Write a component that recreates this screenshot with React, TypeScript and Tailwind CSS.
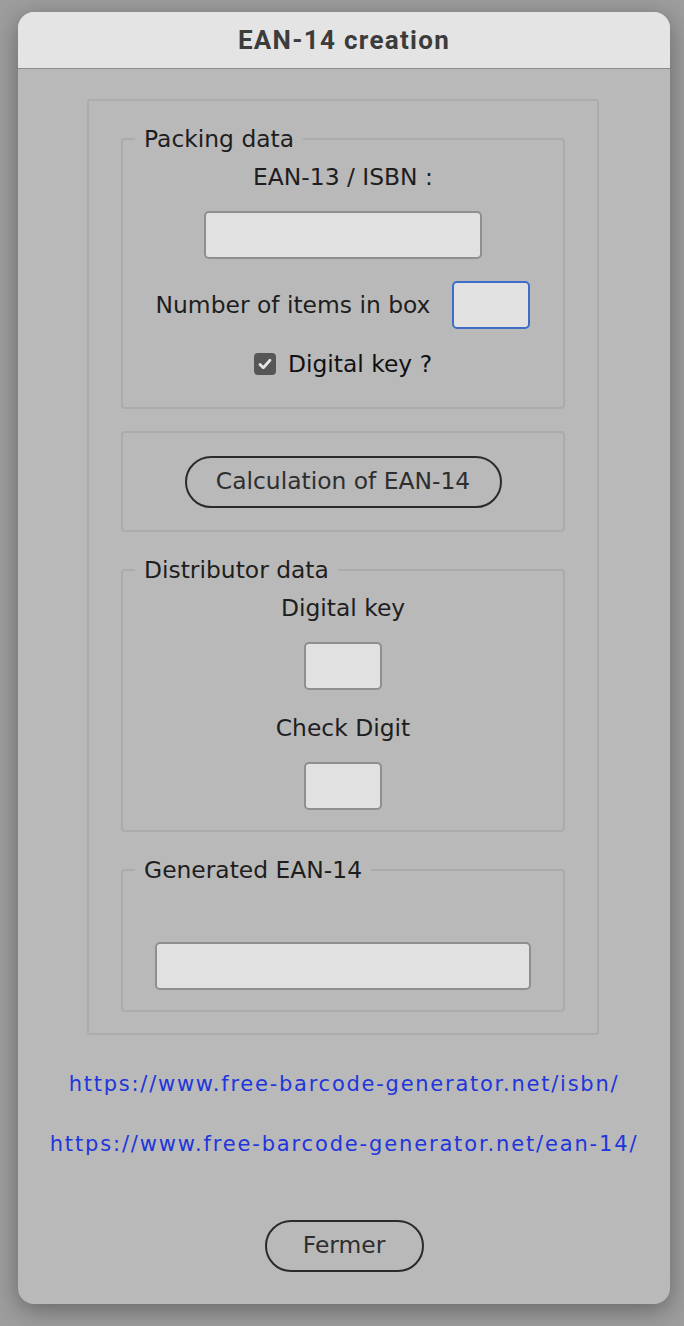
import React from "react";

const FONT = { fontFamily: '"DejaVu Sans", "Liberation Sans", sans-serif' };

function Field({ className = "" }: { className?: string }) {
  return (
    <div className={`h-[48px] rounded-[5px] border-2 border-[#8f8f8f] bg-[#e1e1e1] ${className}`} />
  );
}

function Group({ legend, children, className = "" }: { legend?: string; children: React.ReactNode; className?: string }) {
  return (
    <fieldset className={`rounded-[4px] border-2 border-[#ababab] ${className}`}>
      {legend && (
        <legend className="ml-[12px] px-[9px] text-[23.4px] leading-[28px] text-[#1e1e1e]">{legend}</legend>
      )}
      {children}
    </fieldset>
  );
}

export default function App() {
  return (
    <div className="w-[684px] h-[1326px] bg-[#9d9d9d] pt-[12px] pl-[18px]" style={FONT}>
      <div className="w-[652px] h-[1292px] rounded-[16px] overflow-hidden bg-[#b9b9b9] flex flex-col shadow-[0_6px_24px_rgba(0,0,0,0.35)]">
        {/* title bar */}
        <div className="h-[57px] shrink-0 bg-[#e4e4e4] border-b border-[#8c8c8c] flex items-center justify-center">
          <span
            className="text-[26px] font-bold text-[#3c3c3c] tracking-[1.3px]"
            style={{ fontFamily: 'Roboto, "Liberation Sans", sans-serif' }}
          >
            EAN-14 creation
          </span>
        </div>

        {/* body */}
        <div className="flex flex-col items-center">
          <div className="mt-[30px] ml-[-2px] w-[512px] rounded-[3px] border-2 border-[#acacac] px-[32px] pt-[24px] pb-[21px] flex flex-col">
            <Group legend="Packing data" className="pb-[29px] flex flex-col items-center">
              <div className="mt-[10px] text-[23.4px] leading-[28px] text-[#1e1e1e]">EAN-13 / ISBN :</div>
              <Field className="mt-[20px] w-[278px]" />
              <div className="mt-[22px] flex items-center gap-[22px]">
                <span className="text-[23.4px] leading-[28px] text-[#1e1e1e]">Number of items in box</span>
                <div className="h-[48px] w-[78px] rounded-[5px] border-2 border-[#3d6dc9] bg-[#e1e1e1]" />
              </div>
              <div className="mt-[21px] flex items-center gap-[12px]">
                <div className="w-[22px] h-[22px] rounded-[4px] bg-[#565656] flex items-center justify-center">
                  <svg width="16" height="16" viewBox="0 0 16 16" fill="none">
                    <path d="M3 8.5 L6.3 11.8 L13 4.2" stroke="#e6e6e6" strokeWidth="2.8" strokeLinecap="round" strokeLinejoin="round" />
                  </svg>
                </div>
                <span className="text-[23.4px] leading-[28px] text-[#111]">Digital key ?</span>
              </div>
            </Group>

            <Group className="mt-[22px]">
              <div className="h-[97px] flex items-center justify-center">
                <button className="h-[52px] w-[317px] rounded-full border-2 border-[#2b2b2b] text-[23.4px] text-[#2e2e2e]">
                  Calculation of EAN-14
                </button>
              </div>
            </Group>

            <Group legend="Distributor data" className="mt-[24px] pb-[20px] flex flex-col items-center">
              <div className="mt-[10px] text-[23.4px] leading-[28px] text-[#1e1e1e]">Digital key</div>
              <Field className="mt-[20px] w-[78px]" />
              <div className="mt-[24px] text-[23.4px] leading-[28px] text-[#1e1e1e]">Check Digit</div>
              <Field className="mt-[20px] w-[78px]" />
            </Group>

            <Group legend="Generated EAN-14" className="mt-[24px] pb-[20px] flex flex-col items-center">
              <Field className="mt-[58px] w-[376px]" />
            </Group>
          </div>

          <a className="mt-[35px] text-[21px] leading-[28px] tracking-[1.75px] text-[#2135dc]">https://www.free-barcode-generator.net/isbn/</a>
          <a className="mt-[32px] text-[21px] leading-[28px] tracking-[1.85px] text-[#2135dc]">https://www.free-barcode-generator.net/ean-14/</a>

          <button className="mt-[62px] h-[52px] w-[159px] rounded-full border-2 border-[#2b2b2b] text-[23.4px] text-[#2e2e2e]">
            Fermer
          </button>
        </div>
      </div>
    </div>
  );
}
